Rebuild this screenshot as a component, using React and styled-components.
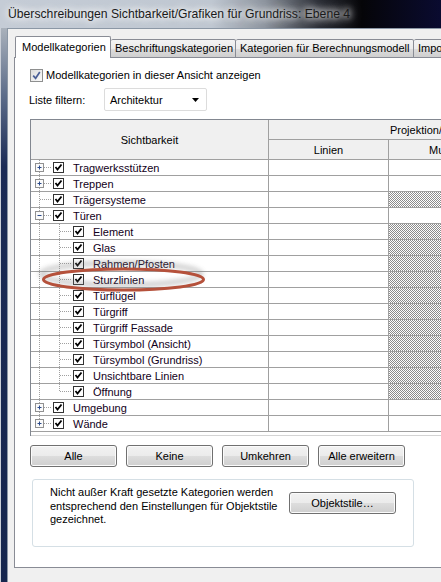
import React from "react";
import styled, { createGlobalStyle } from "styled-components";

const GlobalStyle = createGlobalStyle`
  html, body { margin: 0; padding: 0; background: #f0f0f0; }
  body { font-family: "Liberation Sans", Arial, sans-serif; font-size: 11px; color: #000; }
`;

const rows = [
  { label: "Tragwerksstützen", level: 0, expander: "+" },
  { label: "Treppen", level: 0, expander: "+" },
  { label: "Trägersysteme", level: 0, hatch: true },
  { label: "Türen", level: 0, expander: "-" },
  { label: "Element", level: 1, hatch: true },
  { label: "Glas", level: 1, hatch: true },
  { label: "Rahmen/Pfosten", level: 1, hatch: true },
  { label: "Sturzlinien", level: 1, hatch: true },
  { label: "Türflügel", level: 1, hatch: true },
  { label: "Türgriff", level: 1, hatch: true },
  { label: "Türgriff Fassade", level: 1, hatch: true },
  { label: "Türsymbol (Ansicht)", level: 1, hatch: true },
  { label: "Türsymbol (Grundriss)", level: 1, hatch: true },
  { label: "Unsichtbare Linien", level: 1, hatch: true },
  { label: "Öffnung", level: 1, hatch: true, lastChild: true },
  { label: "Umgebung", level: 0, expander: "+" },
  { label: "Wände", level: 0, expander: "+", last: true },
];

const Window = styled.div`
  width: 441px;
  height: 582px;
  display: flex;
  flex-direction: column;
  overflow: hidden;
`;

const TitleBar = styled.div`
  height: 28px;
  flex: none;
  display: flex;
  align-items: center;
  padding-left: 8px;
  font-size: 12.2px;
  color: #1a1a1a;
  white-space: nowrap;
  background: linear-gradient(90deg, #c5ccd6 0%, #bfc7d1 48%, #8d949e 60%, #2a2d35 72%, #050508 82%, #0a0b30 100%);
  text-shadow: 0 0 6px #fff, 0 0 10px #fff, 0 0 14px rgba(255,255,255,0.8);
`;

const Body = styled.div`
  flex: 1;
  display: flex;
  min-height: 0;
`;

const SideFrame = styled.div`
  width: 7px;
  flex: none;
  background: linear-gradient(180deg, #a9b1bb 0%, #5d6d8a 12%, #1b2b55 25%, #16264e 100%);
  border-left: 1px solid #c9ced6;
  box-sizing: border-box;
`;

const Client = styled.div`
  flex: 1;
  background: #f0f0f0;
  border-left: 1px solid #8b97a5;
  border-top: 1px solid #8b97a5;
  padding: 7px 0 0 6px;
  overflow: hidden;
`;

const TabRow = styled.div`
  display: flex;
  align-items: flex-end;
  height: 22px;
  padding-left: 1px;
  position: relative;
  z-index: 1;
  margin-bottom: -1px;
`;

const Tab = styled.div`
  flex: none;
  width: ${(p) => p.$w}px;
  height: ${(p) => (p.$active ? 22 : 19)}px;
  box-sizing: border-box;
  border: 1px solid #898c95;
  border-bottom: ${(p) => (p.$active ? "none" : "1px solid #898c95")};
  border-left: ${(p) => (p.$first ? "1px solid #898c95" : "none")};
  border-radius: 2px 2px 0 0;
  background: ${(p) =>
    p.$active ? "#fff" : "linear-gradient(180deg, #f3f3f3 0%, #ebebeb 50%, #dddddd 51%, #cfcfcf 100%)"};
  font-size: 11px;
  padding: ${(p) => (p.$active ? "4px 0 0 6px" : "2px 0 0 4px")};
  white-space: nowrap;
  overflow: hidden;
`;

const Panel = styled.div`
  width: 460px;
  height: 511px;
  box-sizing: border-box;
  border: 1px solid #898c95;
  background: #fff;
  padding: 10px 0 0 15px;
  display: flex;
  flex-direction: column;
`;

const CheckRow = styled.label`
  display: flex;
  align-items: center;
  height: 14px;
  gap: 3px;
  font-size: 11px;
`;

const WinCheck = styled.span`
  width: 13px;
  height: 13px;
  box-sizing: border-box;
  border: 1px solid #8e8f8f;
  background: linear-gradient(135deg, #dcdcdc 0%, #fbfbfb 100%);
  display: flex;
  align-items: center;
  justify-content: center;
`;

const FilterRow = styled.div`
  display: flex;
  align-items: center;
  margin-top: 6px;
  height: 23px;
  font-size: 11px;
`;

const FilterLabel = styled.span`
  width: 75px;
  margin-left: -1px;
`;

const Dropdown = styled.div`
  width: 103px;
  height: 23px;
  box-sizing: border-box;
  border: 1px solid #dcdcdc;
  border-radius: 2px;
  display: flex;
  align-items: center;
  justify-content: space-between;
  padding: 0 6px 0 5px;
  font-size: 11px;
`;

const Table = styled.div`
  margin-top: 8px;
  width: 500px;
  border-left: 1px solid #828790;
  border-top: 1px solid #828790;
`;

const Header = styled.div`
  display: grid;
  grid-template-columns: 238px 120px 1fr;
  grid-template-rows: 20px 20px;
  background: #f0f0f0;
  font-size: 11px;
`;

const HeadCell = styled.div`
  grid-column: ${(p) => p.$col};
  grid-row: ${(p) => p.$row};
  border-right: 1px solid #a0a0a0;
  border-bottom: 1px solid #a0a0a0;
  display: flex;
  align-items: center;
  justify-content: ${(p) => p.$justify || "center"};
  padding-left: ${(p) => p.$pad || 0}px;
  white-space: nowrap;
  overflow: hidden;
`;

const Rows = styled.div`
  position: relative;
  border-bottom: 1px solid #d4d4d4;
  padding-bottom: 3px;
`;

const Row = styled.div`
  display: grid;
  grid-template-columns: 238px 120px 1fr;
  height: 16px;
`;

const Cell = styled.div`
  border-right: 1px solid #a0a0a0;
  border-bottom: 1px solid #a0a0a0;
  ${(p) =>
    p.$hatch &&
    `background: repeating-conic-gradient(#8c8c8c 0 25%, #ffffff 0 50%) 0 0 / 2px 2px;`}
`;

const TreeCell = styled(Cell)`
  display: flex;
  align-items: center;
  font-size: 11px;
  white-space: nowrap;
  color: #120020;
`;

const Guides = styled.svg`
  flex: none;
  display: block;
`;

const Label = styled.span`
  margin-left: 9px;
`;

const Overlay = styled.svg`
  position: absolute;
  left: 0;
  top: 0;
  pointer-events: none;
  overflow: visible;
`;

const ButtonRow = styled.div`
  display: flex;
  gap: 9px;
  margin-top: 9px;
`;

const Button = styled.button`
  width: ${(p) => p.$w || 87}px;
  height: ${(p) => p.$h || 22}px;
  margin-top: ${(p) => p.$top || 0}px;
  box-sizing: border-box;
  border: 1px solid #707070;
  border-radius: 3px;
  background: linear-gradient(180deg, #f2f2f2 0%, #ebebeb 50%, #dddddd 51%, #cfcfcf 100%);
  box-shadow: inset 0 0 0 1px #fbfbfb;
  font-family: "Liberation Sans", Arial, sans-serif;
  font-size: 11px;
  color: #000;
  padding: 0;
  flex: none;
`;

const GroupBox = styled.div`
  margin: 12px 0 0 2px;
  width: 382px;
  height: 68px;
  box-sizing: border-box;
  border: 1px solid #d5dfe5;
  border-radius: 3px;
  display: flex;
  align-items: flex-start;
  padding: 6px 0 0 17px;
`;

const Note = styled.p`
  margin: 0;
  width: 239px;
  font-size: 11px;
  line-height: 13.5px;
`;

const Guide = ({ row }) => {
  const w = row.level === 0 ? 22 : 42;
  const dash = { stroke: "#a0a0a0", strokeWidth: 1, strokeDasharray: "1 1" };
  return (
    <Guides width={w} height={15}>
      <line x1="8.5" y1="0" x2="8.5" y2={row.last ? 7.5 : 15} {...dash} />
      {row.level === 0 && <line x1={row.expander ? 13 : 9} y1="7.5" x2="21" y2="7.5" {...dash} />}
      {row.level === 1 && (
        <>
          <line x1="28.5" y1="0" x2="28.5" y2={row.lastChild ? 7.5 : 15} {...dash} />
          <line x1="29" y1="7.5" x2="41" y2="7.5" {...dash} />
        </>
      )}
      {row.expander && (
        <>
          <rect x="4.5" y="3.5" width="8" height="8" fill="#fafafa" stroke="#919191" />
          <line x1="6.5" y1="7.5" x2="10.5" y2="7.5" stroke="#2b4a8a" />
          {row.expander === "+" && <line x1="8.5" y1="5.5" x2="8.5" y2="9.5" stroke="#2b4a8a" />}
        </>
      )}
    </Guides>
  );
};

const TreeCheck = () => (
  <svg width="11" height="11" style={{ flex: "none" }}>
    <rect x="0.5" y="0.5" width="10" height="10" fill="#fff" stroke="#333" />
    <path d="M2.5 5 L4.5 7.5 L8.5 2.5" fill="none" stroke="#000" strokeWidth="1.8" />
  </svg>
);

export default function App() {
  return (
    <>
      <GlobalStyle />
      <Window>
        <TitleBar>Überschreibungen Sichtbarkeit/Grafiken für Grundriss: Ebene 4</TitleBar>
        <Body>
          <SideFrame />
          <Client>
            <TabRow>
              <Tab $active $first $w={96}>Modellkategorien</Tab>
              <Tab $w={125}>Beschriftungskategorien</Tab>
              <Tab $w={178}>Kategorien für Berechnungsmodell</Tab>
              <Tab $w={60}>Importierte Kategorien</Tab>
            </TabRow>
            <Panel>
              <CheckRow>
                <WinCheck>
                  <svg width="9" height="9" viewBox="0 0 9 9">
                    <path d="M1.2 4.6 L3.6 7.3 L7.8 1" fill="none" stroke="#4a5f97" strokeWidth="1.7" />
                  </svg>
                </WinCheck>
                Modellkategorien in dieser Ansicht anzeigen
              </CheckRow>
              <FilterRow>
                <FilterLabel>Liste filtern:</FilterLabel>
                <Dropdown>
                  Architektur
                  <svg width="8" height="4">
                    <path d="M0 0 H7 L3.5 4 Z" fill="#000" />
                  </svg>
                </Dropdown>
              </FilterRow>
              <Table>
                <Header>
                  <HeadCell $col="1" $row="1 / span 2">Sichtbarkeit</HeadCell>
                  <HeadCell $col="2 / span 2" $row="1" $justify="flex-start" $pad={121}>Projektion/Oberfläche</HeadCell>
                  <HeadCell $col="2" $row="2">Linien</HeadCell>
                  <HeadCell $col="3" $row="2" $justify="flex-start" $pad={40}>Muster</HeadCell>
                </Header>
                <Rows>
                  {rows.map((r) => (
                    <Row key={r.label}>
                      <TreeCell>
                        <Guide row={r} />
                        <TreeCheck />
                        <Label>{r.label}</Label>
                      </TreeCell>
                      <Cell />
                      <Cell $hatch={r.hatch} />
                    </Row>
                  ))}
                  <Overlay width="238" height="272">
                    <defs>
                      <filter id="soft" x="-20%" y="-80%" width="140%" height="260%">
                        <feGaussianBlur stdDeviation="2.5" />
                      </filter>
                    </defs>
                    <ellipse cx="90" cy="114" rx="80" ry="11" fill="none" stroke="#7a7a7a" strokeWidth="4" opacity="0.45" filter="url(#soft)" />
                    <ellipse cx="92.5" cy="119.5" rx="80" ry="10.5" fill="none" stroke="#b5513b" strokeWidth="3" />
                  </Overlay>
                </Rows>
              </Table>
              <ButtonRow>
                <Button>Alle</Button>
                <Button>Keine</Button>
                <Button>Umkehren</Button>
                <Button>Alle erweitern</Button>
              </ButtonRow>
              <GroupBox>
                <Note>
                  Nicht außer Kraft gesetzte Kategorien werden entsprechend den Einstellungen für Objektstile gezeichnet.
                </Note>
                <Button $w={107} $top={6}>Objektstile…</Button>
              </GroupBox>
            </Panel>
          </Client>
        </Body>
      </Window>
    </>
  );
}
